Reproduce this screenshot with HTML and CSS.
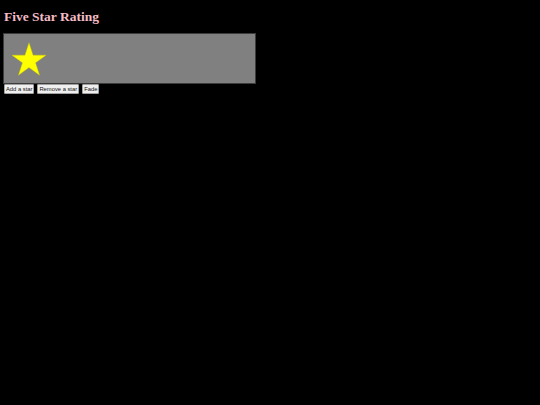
FILE: index.html
```html
<!DOCTYPE html>
<html>
<head>
<meta charset="utf-8">
<title>Five Star Rating</title>
<link rel="stylesheet" href="styles.css">
</head>
<body>
<h1 class="title">Five Star Rating</h1>
<div class="rating">
  <svg class="star" width="36" height="36" viewBox="0 0 36 36" aria-hidden="true">
    <path d="M18 0.7 L22.04 13.14 L35.12 13.14 L24.54 20.82 L28.58 33.26 L18 25.58 L7.42 33.26 L11.46 20.82 L0.88 13.14 L13.96 13.14 Z" fill="#ffff00" stroke="#c8c800" stroke-width="0.4"/>
  </svg>
</div>
<div class="controls">
  <button class="btn">Add a star</button>
  <button class="btn">Remove a star</button>
  <button class="btn">Fade</button>
</div>
</body>
</html>
```
FILE: styles.css
```css
html, body {
  background: #000;
}
body {
  margin: 0;
  padding: 0 4px;
  font-family: "Liberation Sans", Arial, sans-serif;
}
.title {
  margin: 9px 0 0 0;
  font-family: "Liberation Serif", "Times New Roman", serif;
  font-weight: bold;
  font-size: 13.5px;
  line-height: 15px;
  color: #f4bcc6;
}
.rating {
  margin: 9px 0 0 -1px;
  box-sizing: border-box;
  width: 253px;
  height: 51px;
  background: #808080;
  border: 1px solid #3c3c3c;
  display: flex;
  align-items: flex-start;
}
.star {
  display: block;
  margin: 7.5px 0 0 6.8px;
}
.controls {
  display: flex;
  gap: 3px;
  margin-top: 0;
}
.btn {
  font-family: "Liberation Sans", Arial, sans-serif;
  font-size: 5.8px;
  line-height: 8px;
  height: 10px;
  padding: 0 1px;
  margin: 0;
  background: #efefef;
  color: #111;
  border: 1px solid #a0a0a0;
  border-radius: 1px;
}
```
